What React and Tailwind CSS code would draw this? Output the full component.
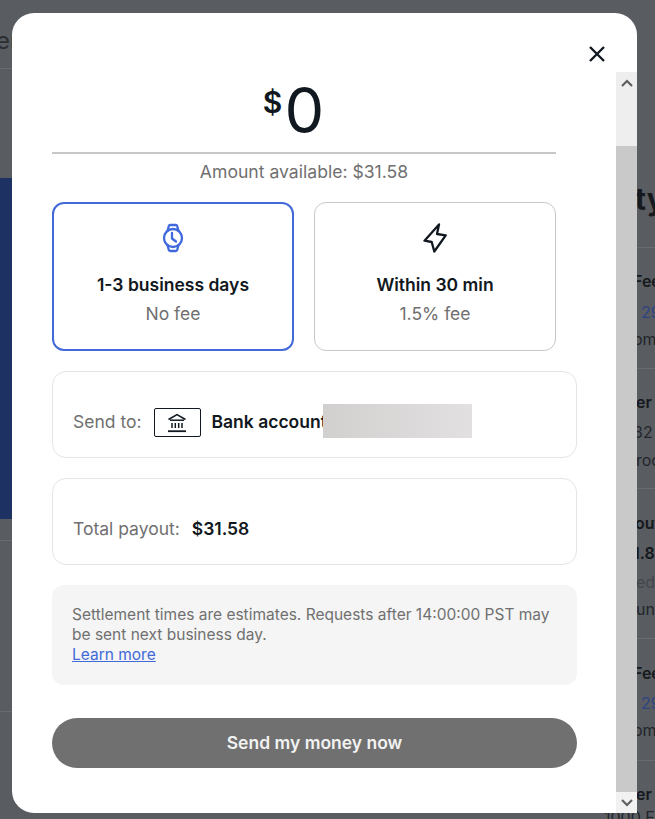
import React from 'react';

const sans = 'font-["Inter","Liberation_Sans",sans-serif]';

const WatchIcon = () => (
    <svg width="24" height="30" viewBox="0 0 24 30" fill="none" stroke="#3f69dc" strokeWidth="2.3" strokeLinecap="round" strokeLinejoin="round">
        <circle cx="12" cy="15" r="9" />
        <path d="M6.5 8 L7.8 3 Q8.1 2 9.2 2 H14.8 Q15.9 2 16.2 3 L17.5 8" />
        <path d="M6.5 22 L7.8 27 Q8.1 28 9.2 28 H14.8 Q15.9 28 16.2 27 L17.5 22" />
        <path d="M11 10 V15.5 L15 18.5" />
    </svg>
);

const BoltIcon = () => (
    <svg width="24" height="30" viewBox="0 0 24 30" fill="none" stroke="#111820" strokeWidth="2.3" strokeLinejoin="round">
        <path d="M16 1.5 L1.5 17.7 L8.7 19 L11.3 28.5 L22.7 12.3 L14 11 Z" />
    </svg>
);

const BankIcon = () => (
    <svg width="20" height="20" viewBox="0 0 20 20" fill="none" stroke="#111820" strokeWidth="1.5">
        <path d="M1.5 6.5 L10 1.5 L18.5 6.5" />
        <path d="M3 7.2 H17" />
        <path d="M5 10 V15 M8.3 10 V15 M11.7 10 V15 M15 10 V15" />
        <path d="M1 18.2 H19" strokeWidth="1.8" />
    </svg>
);

const Chevron = ({ down }) => (
    <svg width="12" height="8" viewBox="0 0 12 8" fill="none" stroke="#5f5f5f" strokeWidth="2.2" className={down ? 'rotate-180' : ''}>
        <path d="M1 7 L6 2 L11 7" />
    </svg>
);

// page behind the dialog, only the edges show
const SideRow = ({ height, lines }) => (
    <div className="border-t border-[#686b6f] flex flex-col" style={{ height }}>
        {lines.map((line, i) => (
            <div key={i} className={line.className}>{line.text}</div>
        ))}
    </div>
);

const PayoutOption = ({ icon, title, fee, selected }) => (
    <div className={`w-[242px] h-[149px] rounded-xl flex flex-col items-center bg-white ${selected ? 'border-2 border-[#4169d8] pt-[19px]' : 'border border-[#c7c7c7] pt-[20px]'}`}>
        {icon}
        <div className="mt-[20px] text-[17.5px] leading-[24px] font-semibold text-[#111820]">{title}</div>
        <div className="mt-[5px] text-[17.5px] leading-[24px] text-[#707070]">{fee}</div>
    </div>
);

export default function App() {
    return (
        <div className={`relative w-[655px] h-[819px] overflow-hidden bg-[#595d61] ${sans}`}>
            <div className="flex justify-between h-full">
                <div className="w-[40px] flex flex-col">
                    <div className="h-[69px] pt-[26px] text-[24px] leading-[30px] text-[#2b2e33] border-b border-[#686b6f] -ml-[4px]">er</div>
                    <div className="h-[109px]"></div>
                    <div className="h-[341px] bg-[#1e3163]"></div>
                    <div className="h-[21px]"></div>
                    <div className="h-[172px] border-t border-b border-[#686b6f]"></div>
                </div>
                <div className="w-[55px] flex flex-col overflow-hidden whitespace-nowrap">
                    <div className="h-[247px] pt-[181px] pl-[35px] text-[30px] leading-[36px] font-bold text-[#16191d]">ty</div>
                    <SideRow height="121px" lines={[
                        { text: 'Fee', className: 'mt-[22px] pl-[33px] text-[16px] leading-[22px] font-semibold text-[#15181c]' },
                        { text: '29', className: 'mt-[9px] pl-[41px] text-[16px] leading-[22px] text-[#2f4383]' },
                        { text: 'om', className: 'mt-[5px] pl-[33px] text-[16px] leading-[22px] text-[#22252a]' },
                    ]} />
                    <SideRow height="120px" lines={[
                        { text: 'er', className: 'mt-[22px] pl-[36px] text-[16px] leading-[22px] font-semibold text-[#15181c]' },
                        { text: '32', className: 'mt-[8px] pl-[33px] text-[16px] leading-[22px] text-[#22252a]' },
                        { text: 'roo', className: 'mt-[6px] pl-[36px] text-[16px] leading-[22px] text-[#22252a]' },
                    ]} />
                    <SideRow height="150px" lines={[
                        { text: 'out', className: 'mt-[23px] pl-[35px] text-[16px] leading-[22px] font-semibold text-[#15181c]' },
                        { text: '1.8', className: 'mt-[8px] pl-[33px] text-[16px] leading-[22px] font-semibold text-[#15181c]' },
                        { text: 'edu', className: 'mt-[7px] pl-[36px] text-[16px] leading-[22px] text-[#43464b]' },
                        { text: 'unc', className: 'mt-[5px] pl-[36px] text-[16px] leading-[22px] text-[#22252a]' },
                    ]} />
                    <SideRow height="122px" lines={[
                        { text: 'Fee', className: 'mt-[23px] pl-[33px] text-[16px] leading-[22px] font-semibold text-[#15181c]' },
                        { text: '29', className: 'mt-[8px] pl-[41px] text-[16px] leading-[22px] text-[#2f4383]' },
                        { text: 'om', className: 'mt-[5px] pl-[33px] text-[16px] leading-[22px] text-[#22252a]' },
                    ]} />
                    <SideRow height="59px" lines={[
                        { text: 'er', className: 'mt-[22px] pl-[36px] text-[16px] leading-[22px] font-semibold text-[#15181c]' },
                        { text: '1000 F', className: 'mt-[1px] pl-[4px] text-[16px] leading-[22px] text-[#22252a]' },
                    ]} />
                </div>
            </div>

            {/* dialog */}
            <div className="absolute left-[12px] top-[13px] w-[625px] h-[800px] bg-white rounded-t-[22px] rounded-bl-[22px] overflow-hidden flex flex-col">
                <div className="h-[59px] flex justify-end items-start pt-[33px] pr-[32px] shrink-0">
                    <svg width="16" height="16" viewBox="0 0 16 16" fill="none" stroke="#111820" strokeWidth="2.4">
                        <path d="M1 1 L15 15 M15 1 L1 15" />
                    </svg>
                </div>
                <div className="flex flex-1 min-h-0">
                    <div className="flex-1 pl-[40px] pr-[39px]">
                        <div className="w-[504px] h-[82px] border-b-2 border-[#c8c8c8] flex justify-center items-start pr-[21px] text-[#111820]">
                            <span className="text-[30px] leading-[36px] font-semibold mt-[12px] mr-[2px]">$</span>
                            <span className="text-[63px] leading-[76px] font-normal">0</span>
                        </div>
                        <div className="w-[504px] mt-[6px] text-center text-[17.6px] leading-[24px] text-[#707070]">Amount available: $31.58</div>
                        <div className="w-[504px] mt-[18px] flex gap-[20px]">
                            <PayoutOption icon={<WatchIcon />} title="1-3 business days" fee="No fee" selected />
                            <PayoutOption icon={<BoltIcon />} title="Within 30 min" fee="1.5% fee" />
                        </div>
                        <div className="mt-[20px] h-[87px] border border-[#e5e5e5] rounded-[14px] flex items-center pl-[20px] pt-[12px]">
                            <span className="mt-[4px] text-[17.5px] text-[#707070]">Send to:</span>
                            <span className="mt-[4px] ml-[12px] w-[47px] h-[29px] border border-[#111820] rounded-[2px] flex items-center justify-center">
                                <BankIcon />
                            </span>
                            <span className="mt-[4px] ml-[11px] w-[111px] overflow-hidden whitespace-nowrap text-[17.5px] font-semibold text-[#111820]">Bank account</span>
                            <span className="w-[149px] h-[34px] bg-gradient-to-r from-[#d1d0cf] to-[#e2e0e0]"></span>
                        </div>
                        <div className="mt-[20px] h-[87px] border border-[#e5e5e5] rounded-[14px] flex items-end pl-[20px] pb-[23px]">
                            <span className="text-[17.5px] leading-[24px] text-[#707070]">Total payout:</span>
                            <span className="ml-[12px] text-[17.5px] leading-[24px] font-semibold text-[#111820]">$31.58</span>
                        </div>
                        <div className="mt-[20px] h-[100px] bg-[#f5f5f5] rounded-xl px-[20px] pt-[20px] text-[15.5px] leading-[20px] text-[#707070]">
                            Settlement times are estimates. Requests after 14:00:00 PST may be sent next business day.
                            <br />
                            <span className="text-[#4169d8] underline">Learn more</span>
                        </div>
                        <button className="mt-[33px] w-full h-[50px] rounded-full bg-[#707070] text-[#f2f2f2] text-[17.5px] font-semibold">Send my money now</button>
                    </div>
                    <div className="w-[21px] shrink-0 flex flex-col">
                        <div className="h-[74px] bg-[#eeeeee] flex justify-center pt-[7px]"><Chevron /></div>
                        <div className="flex-1 bg-[#c9c9c9]"></div>
                        <div className="h-[21px] bg-[#f1f1f1] flex justify-center items-center"><Chevron down /></div>
                    </div>
                </div>
            </div>
        </div>
    );
}
